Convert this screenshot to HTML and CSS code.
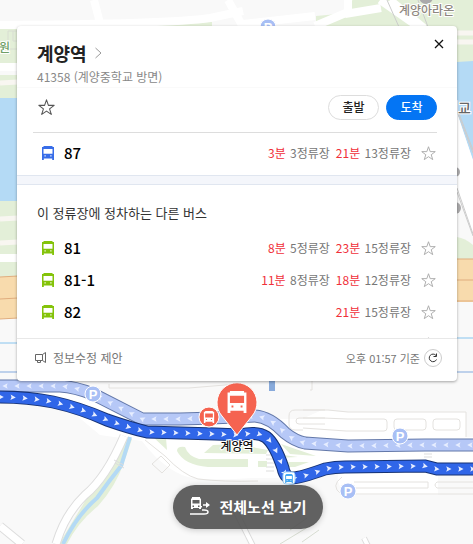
FILE: index.html
```html
<!DOCTYPE html>
<html lang="ko">
<head>
    <meta charset="UTF-8">
    <meta name="viewport" content="width=device-width, initial-scale=1">
    <title>계양역</title>
    <link rel="stylesheet" href="styles.css">
</head>
<body>
    <!-- shared icons -->
    <svg class="icons" aria-hidden="true">
        <symbol id="bus" viewBox="0 0 12 14">
            <path fill="currentColor" fill-rule="evenodd" d="M1.500 0h9v1H12v13h-1.800v-1.500H1.800V14H0V1h1.500zM1.500 3v4.700h9V3zM2.500 9.300v1.200h1.200V9.300zM8.300 9.300v1.200h1.200V9.300z"/>
        </symbol>
        <symbol id="star" viewBox="0 0 16 16">
            <path fill="none" stroke="currentColor" stroke-linejoin="round" d="M8 .8l1.800 5.200h5.400l-4.300 3.300 1.600 5.200L8 11.400l-4.500 3.100 1.600-5.200L.8 6h5.400z"/>
        </symbol>
    </svg>

    <!-- map -->
    <svg class="map" viewBox="0 0 473 544" preserveAspectRatio="xMidYMid slice">
        <rect class="ground" width="473" height="544"/>
        <g class="green">
            <path d="M0 27h18v40H0zM0 75h18v23H0zM0 201h18v76H0z"/>
            <path d="M140 25l72-3v8h-72zM316 16l32-3v-11l5-2h120v62H316z"/>
            <path d="M457 237q8 1 16 8v14h-16z"/>
        </g>
        <path class="block" d="M8 31h12v18H8zM13 31v10h5v-10"/>
        <path class="road" d="M0 25q170-1 210-7l33-7M94 0l6 23M228 0l15 27M0 67h18M0 258h18M243 24l72-8M348 0v12l-33 14M345 14l36-6"/>
        <path class="path" d="M0 83l18-1M0 219l18-1M0 243l18-1M457 33h16M457 42h16"/>
        <path class="water" d="M0 98h18v103H0zM457 62l16-1v100l-16-48z"/>
        <path class="road" d="M380 0l40 28M390 0l34 28"/>
        <path class="rail" d="M387 0l12 27M418 0l10 27"/>
        <path class="plain" d="M457 113l16 47v76l-16-46z"/>
        <path class="rail" d="M457 111l16 42M458 111l15 39M457 188l16 46M457 192l16 44"/>
        <circle class="poi" cx="426" cy="-3" r="7"/>
        <circle class="poi" cx="455" cy="172" r="5"/>
        <circle class="poi" cx="455" cy="208" r="6"/>
        <path class="highway" d="M0 277l18-1v42l-18 1zM457 259h16v43h-16z"/>
        <path class="highway-line" d="M0 277l18-1M0 299l18-1M0 319l18-1M457 259h16M457 280h16M457 301h16"/>
        <path class="subway-line" d="M0 343h18M457 338h16"/>
        <path class="subway-line dark" d="M0 372h18M457 372h16"/>
        <text class="place park" x="-1" y="52">원</text>
        <text class="place" x="399" y="15">계양아라온</text>
        <text class="place bridge" x="445" y="113">대교</text>

        <!-- streets below the panel -->
        <path class="plain" d="M0 390h65l77 29h160l20-9 24 2h120v25h7v36h-35v22h-85q-20-7-14-25-8 0-20 8h-66q-60 4-73-4-20-9-38-33l-42-6L70 410 0 400z"/>
        <path class="stream-bank" d="M124 437l8 2-8 23q-8 24-26 44-20 16-31 38h-8z"/>
        <path class="stream" d="M130 437l-9 29q-12 15-24 32-20 17-34 46"/>
        <path class="road edge" d="M124 436q-18 42-39 59-20 19-29 49M0 526l22 18"/>
        <path class="road white" d="M124 436q-18 42-39 59-20 19-29 49M0 526l22 18"/>
        <path class="road edge thin" d="M236 512l18 36M364 538l4 8"/>
        <path class="road white thin" d="M236 512l18 36M364 538l4 8"/>
        <path class="steps" d="M114 460l10 5M115 463l9 5M266 455h8M266 459h8M266 463h8M266 467h8M266 471h8M424 454h8M424 457h8"/>
        <g class="green">
            <path d="M152 436l14 2 1 12zM177 451q0-5 8-4 3 9 14 12h49v8h-40q-24-2-31-16z"/>
            <path d="M204 453l9-8 23-1 32 6-2 4zM258 461h9v6h-9zM281 444l35 12-26-2zM276 454l22 3-22 1zM279 462h30l-14 5h-16z"/>
        </g>
        <g class="lane">
            <path d="M303 410h25l20 2h118v25M303 418h20l24 1h37q3 0 3 3v6q0 3-3 3h-38l-43-3"/>
            <rect x="394" y="419" width="32" height="11" rx="3"/>
            <rect x="433" y="419" width="27" height="11" rx="3"/>
            <path d="M342 477q-12 9-1 17h132M354 482h74v6h-72M473 482h-36q-4 3 0 6h36"/>
            <path d="M325 410h-30q-6 0-6 6v8q0 6 6 6h8M325 418h-26q-3 0-3 3t3 3h26M109 384v4h80l48-4M310 390h2v-14M152 464l9-8 9 9-8 8zM145 440l20 16q18 19 33 23 25 3 60 2"/>
        </g>
        <path class="block" d="M290 530l17-12M302 542l17-12M280 544l33-20"/>
        <rect class="gate" x="269" y="376" width="6" height="15"/>

        <path class="route-edge" d="M0 386H60Q75 387 93 394L142 419H180Q215 418 255 416Q270 417 285 433Q295 441 305 443L348 446 425 445H473"/>
        <path class="route-fill" id="routeBack" d="M478 445H425L348 446 305 443Q295 441 285 433Q270 417 255 416Q215 418 180 419H142L93 394Q75 387 60 386H-5"/>
        <path class="route-edge main" d="M0 397Q28 397 53 402Q80 408 107 420Q130 428 147 432L215 434 240 435Q257 431 266 437Q275 444 283 468Q285 478 292 478Q300 478 325 469Q335 467 345 467L425 466 437 469H473"/>
        <path class="route-fill main" id="routeGo" d="M-6 397Q28 397 53 402Q80 408 107 420Q130 428 147 432L215 434 240 435Q257 431 266 437Q275 444 283 468Q285 478 292 478Q300 478 325 469Q335 467 345 467L425 466 437 469H480"/>
        <g id="arrows"></g>
        <g class="parking">
            <circle cx="93" cy="394" r="8"/><text x="93" y="399">P</text>
            <circle cx="268" cy="27" r="8"/><text x="268" y="32">P</text>
            <circle cx="400" cy="436" r="8"/><text x="400" y="441">P</text>
            <circle cx="348" cy="491" r="8"/><text x="348" y="496">P</text>
        </g>

        <!-- stops and station marker -->
        <rect class="stop" x="283" y="472" width="12" height="12" rx="3"/>
        <use class="stop-bus" href="#bus" x="285" y="474" width="8" height="9"/>
        <circle class="marker" cx="209" cy="417" r="10"/>
        <use class="marker-bus" href="#bus" x="203" y="411" width="12" height="12"/>
        <path class="marker" d="M237 435L222 416A20 20 0 1 1 252 416Z"/>
        <use class="marker-bus" href="#bus" x="227" y="391" width="20" height="22"/>
        <text class="station" x="237" y="451">계양역</text>
    </svg>

    <main class="page">
        <section class="panel">
            <button class="close" type="button" aria-label="닫기">
                <svg viewBox="0 0 10 10"><path d="M1 1l8 8M9 1L1 9"/></svg>
            </button>
            <header class="header">
                <h1><a href="#">계양역 <svg viewBox="0 0 7 12"><path d="M.5 1L6 6 .5 11"/></svg></a></h1>
                <p>41358 (계양중학교 방면)</p>
            </header>
            <div class="actions">
                <button class="star big" type="button" aria-label="즐겨찾기"><svg><use href="#star"/></svg></button>
                <button class="pill" type="button">출발</button>
                <button class="pill primary" type="button">도착</button>
            </div>

            <ul class="buses first">
                <li class="bus blue">
                    <svg class="bus-icon"><use href="#bus"/></svg>
                    <strong>87</strong>
                    <span class="time"><em>3분</em> 3정류장</span>
                    <span class="time"><em>21분</em> 13정류장</span>
                    <button class="star" type="button" aria-label="87 즐겨찾기"><svg><use href="#star"/></svg></button>
                </li>
            </ul>

            <h2>이 정류장에 정차하는 다른 버스</h2>
            <ul class="buses others">
                <li class="bus">
                    <svg class="bus-icon"><use href="#bus"/></svg>
                    <strong>81</strong>
                    <span class="time"><em>8분</em> 5정류장</span>
                    <span class="time"><em>23분</em> 15정류장</span>
                    <button class="star" type="button" aria-label="81 즐겨찾기"><svg><use href="#star"/></svg></button>
                </li>
                <li class="bus">
                    <svg class="bus-icon"><use href="#bus"/></svg>
                    <strong>81-1</strong>
                    <span class="time"><em>11분</em> 8정류장</span>
                    <span class="time"><em>18분</em> 12정류장</span>
                    <button class="star" type="button" aria-label="81-1 즐겨찾기"><svg><use href="#star"/></svg></button>
                </li>
                <li class="bus">
                    <svg class="bus-icon"><use href="#bus"/></svg>
                    <strong>82</strong>
                    <span class="time"><em>21분</em> 15정류장</span>
                    <button class="star" type="button" aria-label="82 즐겨찾기"><svg><use href="#star"/></svg></button>
                </li>
                <li class="bus">
                    <strong></strong>
                    <button class="star" type="button" aria-label="즐겨찾기"><svg><use href="#star"/></svg></button>
                </li>
            </ul>

            <footer class="footer">
                <a href="#">
                    <svg viewBox="0 0 12 12"><path d="M.5 2.500h7l3-2v10l-3-2h-7zM7.500 2.500v6M2.500 8.500v2h3v-2"/></svg>
                    정보수정 제안
                </a>
                <span>오후 01:57 기준</span>
                <button class="refresh" type="button" aria-label="새로고침">
                    <svg viewBox="0 0 10 10"><path d="M8.500 6.500A3.800 3.800 0 1 1 8 2.500M8.500 .5v3h-3"/></svg>
                </button>
            </footer>
        </section>

        <button class="all-routes" type="button">
            <svg viewBox="0 0 22 20">
                <path class="solid" fill-rule="evenodd" d="M3 0h8v1.500h1V9h1v1.500h-1V12h-2v-1H4v1H2V1.500h1zM3.500 3v3.500h7V3zM3.500 8.500V10H5V8.500zM9 8.500V10h1.500V8.500zM17 5l4 3-4 3z"/>
                <path class="line" d="M14 8h4M1 17h14q4 0 4-2t-4-2H13"/>
            </svg>
            전체노선 보기
        </button>
    </main>

    <script>
        // Direction arrows every 12px along a route
        function drawArrows(id, offset) {
            const route = document.getElementById(id);
            const layer = document.getElementById("arrows");
            for (let d = offset; d < route.getTotalLength(); d += 12) {
                const a = route.getPointAtLength(d);
                const b = route.getPointAtLength(d + 1);
                const angle = Math.atan2(b.y - a.y, b.x - a.x) * 180 / Math.PI;
                const arrow = document.createElementNS("http://www.w3.org/2000/svg", "path");
                arrow.setAttribute("d", "M-2.500 -2.800L2.800 0L-2.500 2.800L-1.500 0Z");
                arrow.setAttribute("class", "arrow");
                arrow.setAttribute("transform", `translate(${a.x} ${a.y}) rotate(${angle})`);
                layer.appendChild(arrow);
            }
        }

        drawArrows("routeBack", 8);
        drawArrows("routeGo", 7);
    </script>
</body>
</html>
```

FILE: styles.css
```css
* {
    box-sizing: border-box;
}

body {
    margin: 0;
    background: #f9f9f9;
    color: #222;
    font-family: "Noto Sans CJK KR", sans-serif;
    font-size: 12px;
    line-height: 20px;
}

h1, h2, p, ul {
    margin: 0;
    padding: 0;
}

a {
    color: inherit;
    text-decoration: none;
}

button {
    padding: 0;
    border: none;
    background: none;
    color: inherit;
    font: inherit;
    cursor: pointer;
}

.icons {
    position: absolute;
    width: 0;
    height: 0;
}

/* Map */
.map {
    position: absolute;
    top: 0;
    left: 0;
    width: 100%;
    height: 100%;
}

.map path {
    fill: none;
}

.ground {
    fill: #f9f9f9;
}

.map .green path {
    fill: #e3efd8;
}

.map .water {
    fill: #b4daf5;
}

.map .plain {
    fill: #fff;
}

.block {
    stroke: #d8ddd2;
}

.road {
    stroke: #fff;
    stroke-width: 8;
}

.road.edge {
    stroke: #ddd;
    stroke-width: 9;
}

.road.white {
    stroke-width: 7;
}

.road.edge.thin {
    stroke-width: 6;
}

.road.white.thin {
    stroke-width: 4;
}

.path {
    stroke: #f8f6f1;
    stroke-width: 5;
}

.rail {
    stroke: #ccc;
}

.poi {
    fill: #aaa9ab;
}

.map .highway {
    fill: #f8dbad;
}

.highway-line {
    stroke: #e0ad7e;
}

.subway-line {
    stroke: #87c4ee;
}

.subway-line.dark {
    stroke: #83a9dd;
}

.place {
    fill: #8e8780;
    stroke: #fff;
    stroke-width: 2px;
    paint-order: stroke;
    font-size: 12px;
    font-weight: 500;
}

.place.park {
    fill: #6f9f67;
}

.place.bridge {
    fill: #666;
    font-size: 14px;
}

.map .stream-bank {
    fill: #e3efd8;
}

.stream {
    stroke: #b4daf5;
    stroke-width: 4;
}

.steps {
    stroke: #ddd;
}

.lane {
    fill: none;
    stroke: #e4e2df;
}

.gate {
    fill: #88aadb;
}

.route-edge {
    stroke: #6378a9;
    stroke-width: 13;
}

.route-fill {
    stroke: #b6c8f7;
    stroke-width: 11;
}

.route-edge.main {
    stroke: #163274;
}

.route-fill.main {
    stroke: #3066e8;
}

.map .arrow {
    fill: #e6edff;
}

.parking circle {
    fill: #a8bff5;
    stroke: #fff;
}

.parking text {
    fill: #fff;
    font-family: "Liberation Sans", sans-serif;
    font-size: 13px;
    font-weight: 700;
    text-anchor: middle;
}

.stop {
    fill: #fff;
    stroke: #9ed3fa;
}

.stop-bus {
    color: #45a9f4;
}

.map .marker {
    fill: #f56350;
    stroke: #fff;
}

.marker-bus {
    color: #fff;
}

.station {
    fill: #111;
    stroke: #fff;
    stroke-width: 2px;
    paint-order: stroke;
    font-size: 12px;
    font-weight: 500;
    text-anchor: middle;
}

/* Page */
.page {
    position: relative;
    display: flex;
    flex-direction: column;
    min-height: 100vh;
    padding: 26px 16px 15px 17px;
}

.panel {
    position: relative;
    border-radius: 4px;
    background: #fff;
    box-shadow: 0 1px 3px rgba(0, 0, 0, 0.35);
}

.close {
    position: absolute;
    top: 8px;
    right: 8px;
    display: grid;
    place-items: center;
    width: 20px;
    height: 20px;
}

.close svg {
    width: 10px;
    height: 10px;
    stroke: #111;
    stroke-width: 1.3;
}

.header {
    padding: 13px 20px 0;
    border-bottom: 1px solid #fafafa;
}

h1 {
    font-size: 18px;
    font-weight: 700;
    line-height: 28px;
}

h1 a {
    display: flex;
    align-items: center;
    gap: 8px;
}

h1 svg {
    width: 7px;
    height: 12px;
    fill: none;
    stroke: #999;
}

.header p {
    color: #888;
}

.actions {
    display: flex;
    align-items: center;
    gap: 7px;
    height: 45px;
    margin: 0 20px 0 16px;
    padding: 0 0 6px 5px;
    border-bottom: 1px solid #ddd;
}

.pill {
    width: 51px;
    height: 25px;
    border: 1px solid #ddd;
    border-radius: 13px;
    font-weight: 500;
    line-height: 22px;
}

.pill.primary {
    border-color: #0475f4;
    background: #0475f4;
    color: #fff;
}

.star {
    display: flex;
    margin-left: 4px;
    color: #aaa;
}

.star svg {
    width: 15px;
    height: 15px;
}

.star.big {
    margin: 0 auto 0 0;
    color: #555;
}

.star.big svg {
    width: 17px;
    height: 17px;
}

.buses {
    list-style: none;
}

.first {
    padding: 4px 0 6px;
}

.others {
    height: 106px;
    overflow: hidden;
}

.bus {
    display: flex;
    align-items: center;
    gap: 6px;
    height: 32px;
    padding: 0 21px 0 25px;
    color: #777;
}

.bus-icon {
    width: 12px;
    height: 14px;
    color: #84c30a;
}

.blue .bus-icon {
    color: #386de8;
}

.bus strong {
    margin: 0 auto 0 4px;
    color: #000;
    font-size: 15px;
    font-weight: 500;
}

.bus em {
    margin-right: 1px;
    color: #f0303a;
    font-style: normal;
}

h2 {
    padding: 18px 20px 9px;
    color: #333;
    font-size: 13px;
    font-weight: 400;
}

h2::before {
    content: "";
    display: block;
    height: 8px;
    margin: -18px -20px 18px;
    border: 1px solid #e0e6f0;
    border-width: 1px 0;
    background: #f4f6fb;
}

.footer {
    display: flex;
    align-items: center;
    gap: 4px;
    height: 43px;
    padding: 0 15px 4px 18px;
    border-top: 1px solid #e8e8e8;
    color: #777;
}

.footer a {
    display: flex;
    align-items: center;
    gap: 6px;
    margin-right: auto;
}

.footer a svg {
    width: 12px;
    height: 12px;
    fill: none;
    stroke: #666;
}

.footer span {
    font-size: 11px;
}

.refresh {
    display: grid;
    place-items: center;
    width: 18px;
    height: 18px;
    border: 1px solid #ccc;
    border-radius: 50%;
}

.refresh svg {
    width: 10px;
    height: 10px;
    fill: none;
    stroke: #333;
}

.all-routes {
    display: flex;
    align-items: center;
    align-self: center;
    gap: 8px;
    height: 44px;
    margin: auto 0 0 22px;
    padding: 0 16px;
    border-radius: 22px;
    background: rgba(80, 80, 80, 0.9);
    box-shadow: 0 1px 6px rgba(0, 0, 0, 0.2);
    color: #fff;
    font-size: 15px;
    font-weight: 700;
}

.all-routes svg {
    width: 22px;
    height: 20px;
}

.solid {
    fill: #fff;
}

.line {
    fill: none;
    stroke: #fff;
    stroke-width: 1.5;
}
```
